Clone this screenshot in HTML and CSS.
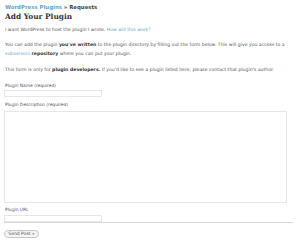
FILE: index.html
```html
<!DOCTYPE html>
<html lang="en">
<head>
    <meta charset="UTF-8">
    <title>Add Your Plugin</title>
    <link rel="stylesheet" href="styles.css">
</head>
<body>
    <div class="page">
        <div class="crumbs"><a href="#">WordPress Plugins</a> &raquo; Requests</div>
        <h1>Add Your Plugin</h1>

        <p>I want WordPress to host the plugin I wrote. <a href="#">How will this work?</a></p>
        <p>You can add the plugin <strong>you've written</strong> to the plugin directory by filling out the form below. This will give you access to a <a href="#">subversion</a> <strong>repository</strong> where you can put your plugin.</p>
        <p>This form is only for <strong>plugin developers.</strong> If you'd like to see a plugin listed here, please contact that plugin's author.</p>

        <form class="plugin-form">
            <label class="field-label" for="name">Plugin Name (required)</label>
            <input class="text-input" type="text" id="name">

            <label class="field-label desc-label" for="desc">Plugin Description (required)</label>
            <textarea class="text-area" id="desc"></textarea>

            <label class="field-label" for="url">Plugin URL</label>
            <input class="text-input" type="text" id="url">

            <div class="divider"></div>

            <button type="submit" class="send-btn">Send Post &raquo;</button>
        </form>
    </div>
</body>
</html>
```

FILE: styles.css
```css
body {
    margin: 0;
    background: #fff;
    font-family: 'DejaVu Sans', Verdana, sans-serif;
    color: #555;
}

.page {
    padding: 4px 5px 0 4px;
}

a {
    color: #6a9fc4;
    text-decoration: none;
}

.crumbs {
    font-size: 5.4px;
    font-weight: bold;
    line-height: 7px;
    color: #444;
    padding-left: 1px;
}

h1 {
    font-family: 'DejaVu Serif', Georgia, serif;
    font-size: 7.4px;
    line-height: 9px;
    color: #333;
    margin: 0.5px 0 0 1px;
}

p {
    font-size: 4.6px;
    line-height: 8.6px;
    margin: 5px 0 7.4px 1px;
}

p strong {
    color: #333;
}

.plugin-form {
    margin-top: 8px;
}

.field-label {
    display: block;
    font-size: 4.4px;
    line-height: 6px;
    padding-left: 1px;
}

.text-input {
    display: block;
    box-sizing: border-box;
    width: 98px;
    height: 7px;
    margin: 1.5px 0 0;
    padding: 0;
    border: 1px solid #e6e6e6;
}

.desc-label {
    margin-top: 5px;
}

.text-area {
    display: block;
    box-sizing: border-box;
    width: 283px;
    height: 92px;
    margin: 3px 0 4px;
    padding: 0;
    border: 1px solid #e6e6e6;
    resize: none;
}

.divider {
    width: 289px;
    border-top: 1px solid #d8d8d8;
    margin-top: 0;
}

.send-btn {
    display: block;
    margin-top: 7px;
    width: 35px;
    height: 8px;
    padding: 0;
    font-family: 'DejaVu Sans', Verdana, sans-serif;
    font-size: 4.5px;
    line-height: 6px;
    color: #555;
    background: #f4f4f4;
    border: 1px solid #c8c8c8;
    border-radius: 5px;
}
```
